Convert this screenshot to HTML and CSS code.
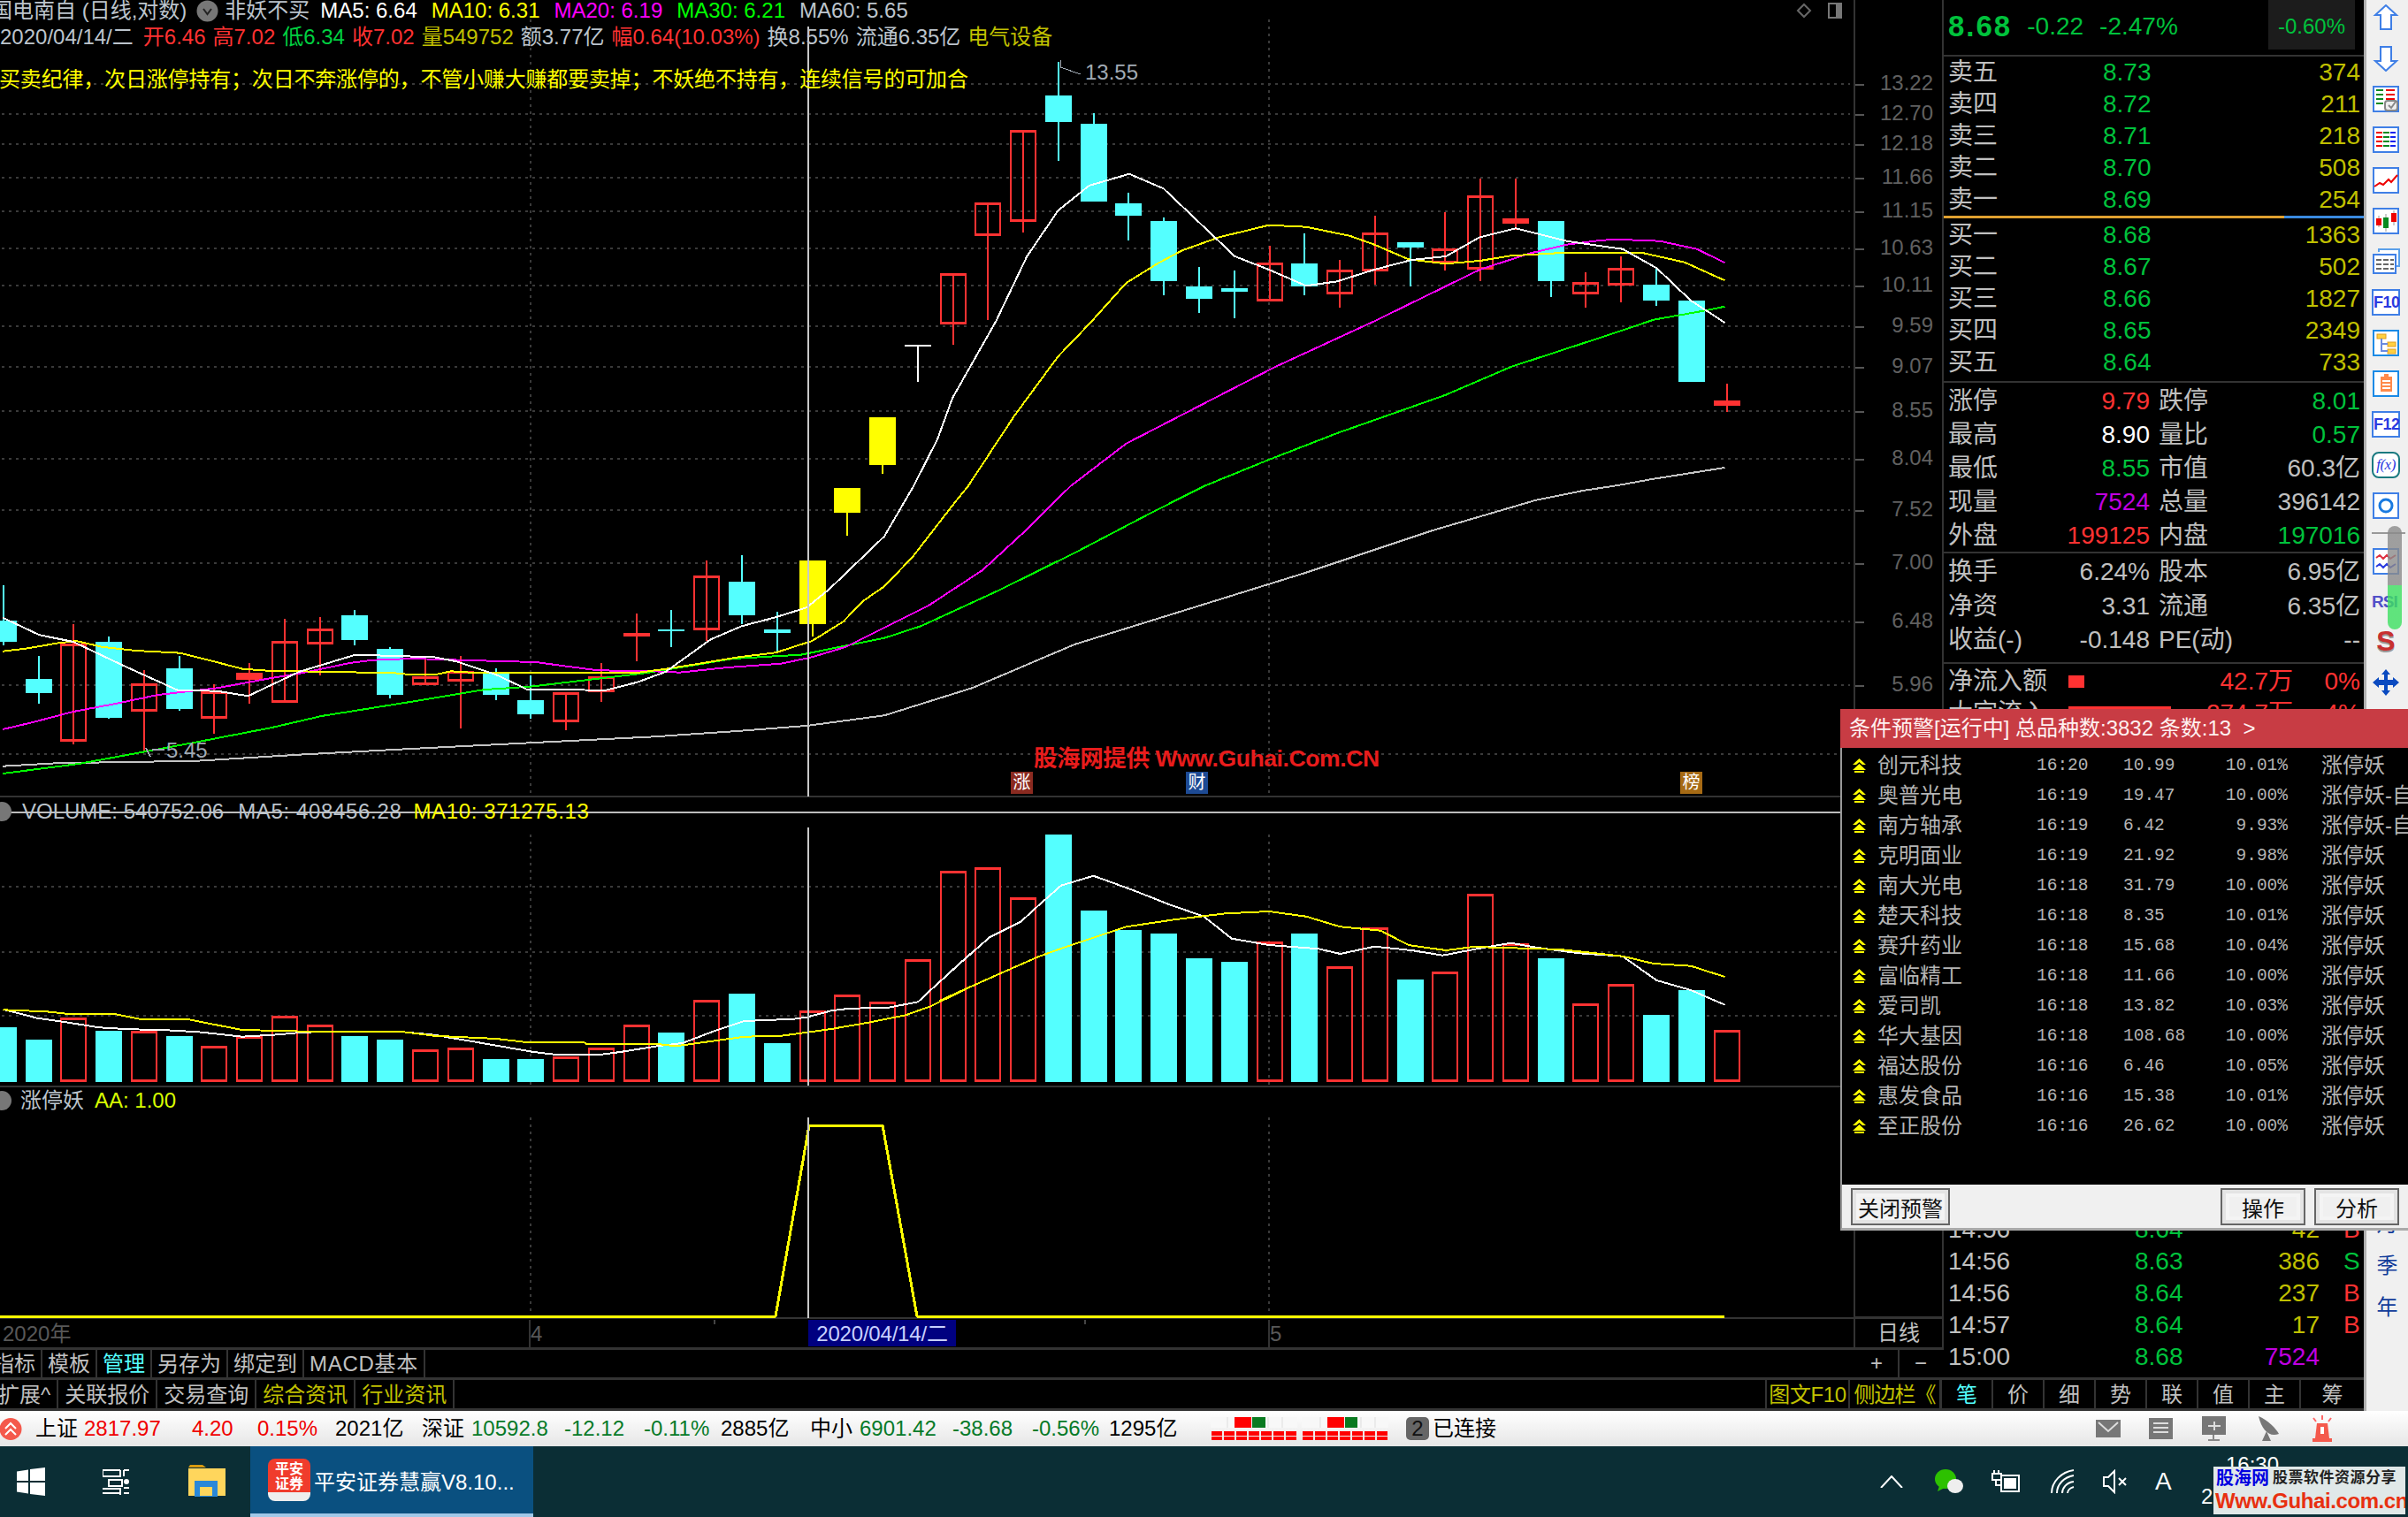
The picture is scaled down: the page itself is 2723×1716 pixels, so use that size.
FILE: index.html
```html
<!DOCTYPE html>
<html lang="zh-CN">
<head>
<meta charset="utf-8">
<title>平安证券慧赢</title>
<link rel="stylesheet" href="styles.css">
<script src="app.js" defer></script>
</head>
<body>
<svg class="defs" width="0" height="0">
  <symbol id="chev" viewBox="0 0 15 16">
    <path d="M7.5 0 15 7H11L7.5 4 4 7H0Z M7.5 6 15 13H0Z M2 14H13V16H2Z" fill="#ffff00"/>
  </symbol>
</svg>
<div class="app">
  <div class="workspace">
    <div class="body">
      <div class="upper">
        <div class="left">
          <div class="main-row">
            <svg id="chart" class="chart-canvas" width="2198" height="1524"></svg>
            <div class="charts">
              <section class="pane pane-price">
                <div class="title-row">
                  <span class="t-gray">国电南自 (日线,对数)</span>
                  <svg class="pill" width="25" height="25" viewBox="0 0 25 25"><circle cx="12.5" cy="12.5" r="12" fill="#777"/><path d="M8 10l4.500 6 4.500-6" fill="none" stroke="#222" stroke-width="2"/></svg>
                  <span class="t-gray study">非妖不买</span>
                  <span class="t-white">MA5: 6.64</span>
                  <span class="t-yellow">MA10: 6.31</span>
                  <span class="t-magenta">MA20: 6.19</span>
                  <span class="t-lime">MA30: 6.21</span>
                  <span class="t-gray">MA60: 5.65</span>
                </div>
                <div class="info-row">
                  <span class="t-gray date">2020/04/14/二</span>
                  <span class="t-red">开6.46</span>
                  <span class="t-red">高7.02</span>
                  <span class="t-green">低6.34</span>
                  <span class="t-red">收7.02</span>
                  <span class="t-olive">量549752</span>
                  <span class="t-gray">额3.77亿</span>
                  <span class="t-red">幅0.64(10.03%)</span>
                  <span class="t-gray">换8.55%</span>
                  <span class="t-gray">流通6.35亿</span>
                  <span class="t-olive">电气设备</span>
                </div>
                <div class="note-row">买卖纪律，次日涨停持有；次日不奔涨停的，不管小赚大赚都要卖掉；不妖绝不持有，连续信号的可加合</div>
                <div class="credit">股海网提供 Www.Guhai.Com.CN</div>
                <span class="mark mark-rise">涨</span>
                <span class="mark mark-fin">财</span>
                <span class="mark mark-top">榜</span>
              </section>
              <section class="pane pane-vol">
                <div class="pane-title">
                  <svg class="pill-s" width="14" height="24" viewBox="0 0 14 24"><circle cx="2" cy="12" r="11" fill="#777"/></svg>
                  <span class="t-gray vol-name">VOLUME: 540752.06</span>
                  <span class="t-gray wide">MA5: 408456.28</span>
                  <span class="t-yellow wide">MA10: 371275.13</span>
                </div>
              </section>
              <section class="pane pane-limit">
                <div class="pane-title">
                  <svg class="pill-s" width="14" height="24" viewBox="0 0 14 24"><circle cx="2" cy="12" r="11" fill="#777"/></svg>
                  <span class="t-gray vol-name">涨停妖</span>
                  <span class="t-lemon">AA: 1.00</span>
                </div>
              </section>
              <div class="timeline">
                <span class="tick-label tl-year">2020年</span>
                <span class="tick-label tl-apr">4</span>
                <span class="tl-current">2020/04/14/二</span>
                <span class="tick-label tl-may">5</span>
              </div>
            </div>
            <div class="axis">
              <div class="axis-space"></div>
              <div class="axis-cell">日线</div>
              <div class="axis-zoom"><span>+</span><span>−</span></div>
            </div>
          </div>
          <nav class="tabs tabs-formula">
            <span class="tab first">指标</span>
            <span class="tab">模板</span>
            <span class="tab on">管理</span>
            <span class="tab">另存为</span>
            <span class="tab">绑定到</span>
            <span class="tab macd">MACD基本</span>
          </nav>
        </div>
        <aside class="quote">
          <header class="quote-head">
            <span class="last">8.68</span>
            <span class="chg">-0.22</span>
            <span class="chg">-2.47%</span>
            <span class="open-gap">-0.60%</span>
          </header>
          <div class="depth">
            <div class="depth-row"><span>卖五</span><span class="up">8.73</span><span class="qty">374</span></div>
            <div class="depth-row"><span>卖四</span><span class="up">8.72</span><span class="qty">211</span></div>
            <div class="depth-row"><span>卖三</span><span class="up">8.71</span><span class="qty">218</span></div>
            <div class="depth-row"><span>卖二</span><span class="up">8.70</span><span class="qty">508</span></div>
            <div class="depth-row"><span>卖一</span><span class="up">8.69</span><span class="qty">254</span></div>
          </div>
          <div class="ratio-line"><i></i></div>
          <div class="depth">
            <div class="depth-row"><span>买一</span><span class="up">8.68</span><span class="qty">1363</span></div>
            <div class="depth-row"><span>买二</span><span class="up">8.67</span><span class="qty">502</span></div>
            <div class="depth-row"><span>买三</span><span class="up">8.66</span><span class="qty">1827</span></div>
            <div class="depth-row"><span>买四</span><span class="up">8.65</span><span class="qty">2349</span></div>
            <div class="depth-row"><span>买五</span><span class="up">8.64</span><span class="qty">733</span></div>
          </div>
          <div class="stats stats-a">
            <div class="stat"><span>涨停</span><b class="red">9.79</b><span>跌停</span><b class="up">8.01</b></div>
            <div class="stat"><span>最高</span><b class="white">8.90</b><span>量比</span><b class="up">0.57</b></div>
            <div class="stat"><span>最低</span><b class="up">8.55</b><span>市值</span><b>60.3亿</b></div>
            <div class="stat"><span>现量</span><b class="purple">7524</b><span>总量</span><b>396142</b></div>
            <div class="stat"><span>外盘</span><b class="red">199125</b><span>内盘</span><b class="up">197016</b></div>
          </div>
          <div class="stats stats-b">
            <div class="stat"><span>换手</span><b>6.24%</b><span>股本</span><b>6.95亿</b></div>
            <div class="stat"><span>净资</span><b>3.31</b><span>流通</span><b>6.35亿</b></div>
            <div class="stat"><span>收益(-)</span><b>-0.148</b><span>PE(动)</span><b>--</b></div>
          </div>
          <div class="flows">
            <div class="flow"><span>净流入额</span><i class="flow-bar one"></i><b>42.7万</b><b>0%</b></div>
            <div class="flow"><span>大宗流入</span><i class="flow-bar big"></i><b>274.7万</b><b>4%</b></div>
          </div>
          <div class="trades">
            <div class="trade"><span>14:56</span><span class="up">8.64</span><span class="qty">42</span><span class="red">B</span></div>
            <div class="trade"><span>14:56</span><span class="up">8.63</span><span class="qty">386</span><span class="up">S</span></div>
            <div class="trade"><span>14:56</span><span class="up">8.64</span><span class="qty">237</span><span class="red">B</span></div>
            <div class="trade"><span>14:57</span><span class="up">8.64</span><span class="qty">17</span><span class="red">B</span></div>
            <div class="trade"><span>15:00</span><span class="up">8.68</span><span class="purple right">7524</span><span></span></div>
          </div>
        </aside>
      </div>
      <nav class="tabs tabs-info">
        <span class="tab first">扩展^</span>
        <span class="tab">关联报价</span>
        <span class="tab">交易查询</span>
        <span class="tab olive">综合资讯</span>
        <span class="tab olive">行业资讯</span>
        <span class="tab-gap"></span>
        <span class="tab olive f10">图文F10</span>
        <span class="tab olive side">侧边栏《</span>
        <span class="tab sq on">笔</span>
        <span class="tab sq">价</span>
        <span class="tab sq">细</span>
        <span class="tab sq">势</span>
        <span class="tab sq">联</span>
        <span class="tab sq">值</span>
        <span class="tab sq">主</span>
        <span class="tab sq">筹</span>
      </nav>
    </div>
    <div class="tools">
      <svg class="ti" width="32" height="30" viewBox="0 0 32 30"><path d="M16 1 28 12H22V28H10V12H4Z" fill="#fff" stroke="#3f7fe6" stroke-width="2"/></svg>
      <svg class="ti" width="32" height="30" viewBox="0 0 32 30"><path d="M16 29 28 18H22V2H10V18H4Z" fill="#fff" stroke="#3f7fe6" stroke-width="2"/></svg>
      <svg class="ti" width="32" height="30" viewBox="0 0 32 30"><rect x="2" y="1" width="28" height="28" fill="#fff" stroke="#3f7fe6" stroke-width="2"/><path d="M5 5h8M5 10h8M5 15h8M5 20h8" stroke="#0a8a20" stroke-width="2"/><path d="M16 5h10M16 10h10M16 15h10" stroke="#e00" stroke-width="2"/><rect x="15" y="17" width="14" height="11" rx="3" fill="#eee" stroke="#888" stroke-width="2"/><path d="M19 22l3 3 5-7" fill="none" stroke="#888" stroke-width="2"/></svg>
      <svg class="ti" width="32" height="30" viewBox="0 0 32 30"><rect x="2" y="1" width="28" height="28" fill="#fff" stroke="#3f7fe6" stroke-width="2"/><path d="M5 7h7M5 12h7M5 17h7M5 22h7" stroke="#e00" stroke-width="2"/><path d="M13 7h7M13 12h7M13 17h7M13 22h7" stroke="#0a8a20" stroke-width="2"/><path d="M21 7h6M21 12h6M21 17h6M21 22h6" stroke="#12e" stroke-width="2"/></svg>
      <svg class="ti" width="32" height="30" viewBox="0 0 32 30"><rect x="2" y="1" width="28" height="28" fill="#fff" stroke="#3f7fe6" stroke-width="2"/><path d="M3 22 9 18 13 20 19 14 22 17 29 9" fill="none" stroke="#e00" stroke-width="2"/></svg>
      <svg class="ti" width="32" height="30" viewBox="0 0 32 30"><rect x="2" y="1" width="28" height="28" fill="#fff" stroke="#3f7fe6" stroke-width="2"/><path d="M8 9V22M16 7V27M25 3V20" stroke="#999" stroke-width="1"/><rect x="5" y="12" width="6" height="8" fill="#e00"/><rect x="13" y="11" width="6" height="12" fill="#0a8a20"/><rect x="22" y="6" width="6" height="10" fill="#e00"/></svg>
      <svg class="ti" width="32" height="30" viewBox="0 0 32 30"><path d="M8 4V1H31V20H28" fill="#fff" stroke="#5aa0ea" stroke-width="2"/><rect x="2" y="7" width="25" height="21" fill="#fff" stroke="#3f7fe6" stroke-width="2"/><path d="M5 13h6M13 13h6M21 13h4M5 18h6M13 18h6M21 18h4M5 23h6M13 23h6M21 23h4" stroke="#666" stroke-width="2"/></svg>
      <div class="ti tb">F10</div>
      <svg class="ti" width="32" height="30" viewBox="0 0 32 30"><rect x="2" y="1" width="28" height="28" fill="#fff" stroke="#1a8ae6" stroke-width="2"/><rect x="6" y="5" width="10" height="5" fill="#ffd040" stroke="#e0a020"/><rect x="18" y="14" width="9" height="5" fill="#ffd040" stroke="#e0a020"/><rect x="18" y="22" width="9" height="5" fill="#ffd040" stroke="#e0a020"/><path d="M11 10V24H18M11 16H18" fill="none" stroke="#6a8ae0" stroke-width="2"/></svg>
      <svg class="ti" width="32" height="30" viewBox="0 0 32 30"><rect x="2" y="1" width="28" height="28" fill="#fff" stroke="#1a8ae6" stroke-width="2"/><rect x="10" y="7" width="13" height="17" fill="#ff8a4a"/><rect x="14" y="4" width="5" height="4" fill="#ff8a4a"/><path d="M12 12h9M12 16h9M12 20h9" stroke="#fff" stroke-width="2"/></svg>
      <div class="ti tb">F12</div>
      <div class="ti tb fx">f(x)</div>
      <svg class="ti" width="32" height="30" viewBox="0 0 32 30"><rect x="2" y="1" width="28" height="28" fill="#fff" stroke="#3f7fe6" stroke-width="2"/><ellipse cx="16" cy="15" rx="7" ry="7" fill="none" stroke="#1a7ae0" stroke-width="3"/></svg>
      <div class="tool-sep"></div>
      <svg class="ti" width="32" height="30" viewBox="0 0 32 30"><rect x="2" y="1" width="28" height="28" fill="#fff" stroke="#3f7fe6" stroke-width="2"/><path d="M5 11 9 8 13 12 17 8 21 12 27 8" fill="none" stroke="#e03040" stroke-width="2"/><path d="M5 21 9 18 13 22 17 18 21 22 27 18" fill="none" stroke="#2a3ae0" stroke-width="2"/></svg>
      <div class="tool-rsi">RSI</div>
      <div class="tool-s">S</div>
      <svg class="ti move" width="32" height="30" viewBox="0 0 32 30"><path d="M16 0 21 6H18V12H24V9L31 15 24 21V18H18V24H21L16 30 11 24H14V18H8V21L1 15 8 9V12H14V6H11Z" fill="#0a4ac0"/></svg>
      <div class="tool-words"><span>月</span><span>季</span><span>年</span></div>
      <div class="scroll-thumb"></div>
    </div>
  </div>
  <footer class="statusbar">
    <svg class="alarm" width="25" height="25" viewBox="0 0 25 25"><circle cx="12" cy="12.500" r="12.500" fill="#f4594c"/><path d="M6 12l6-6 6 6M6 19l6-6 6 6" fill="none" stroke="#fff" stroke-width="2"/></svg>
    <div class="idx idx-sh"><span>上证</span><span class="s-red">2817.97</span><span class="s-red">4.20</span><span class="s-red">0.15%</span><span>2021亿</span></div>
    <div class="idx idx-sz"><span>深证</span><span class="s-green">10592.8</span><span class="s-green">-12.12</span><span class="s-green">-0.11%</span><span>2885亿</span></div>
    <div class="idx idx-sz"><span>中小</span><span class="s-green">6901.42</span><span class="s-green">-38.68</span><span class="s-green">-0.56%</span><span>1295亿</span></div>
    <svg class="meter" width="98" height="26" viewBox="0 0 98 26"><rect width="98" height="12" fill="#f8f8f8"/><path d="M19 0v12M65 0v12M81 0v12" stroke="#ddd"/><rect x="27" width="19" height="12" fill="#f00"/><rect x="47" width="15" height="12" fill="#0a7a20"/><path d="M7 16v5M21 16v5M35 16v5M49 16v5M63 16v5M77 16v5M91 16v5M7 22v4M21 22v4M35 22v4M49 22v4M63 22v4M77 22v4M91 22v4" stroke="#f00" stroke-width="12" stroke-dasharray="5 1"/></svg>
    <svg class="meter second" width="98" height="26" viewBox="0 0 98 26"><rect width="98" height="12" fill="#f8f8f8"/><path d="M21 0v12M67 0v12M83 0v12" stroke="#ddd"/><rect x="29" width="19" height="12" fill="#f00"/><rect x="49" width="14" height="12" fill="#0a7a20"/><path d="M7 16v5M21 16v5M35 16v5M49 16v5M63 16v5M77 16v5M91 16v5M7 22v4M21 22v4M35 22v4M49 22v4M63 22v4M77 22v4M91 22v4" stroke="#f00" stroke-width="12" stroke-dasharray="5 1"/></svg>
    <span class="badge">2</span>
    <span class="conn">已连接</span>
    <div class="status-icons">
      <svg width="28" height="28" viewBox="0 0 28 28"><rect width="28" height="20" y="4" fill="#777"/><path d="M3 7 14 17 25 7" fill="none" stroke="#ddd" stroke-width="2"/></svg>
      <svg width="28" height="28" viewBox="0 0 28 28"><rect width="27" height="24" y="2" fill="#777"/><path d="M5 8h17M5 13h17M5 18h17" stroke="#ddd" stroke-width="2"/></svg>
      <svg width="28" height="28" viewBox="0 0 28 28"><rect width="27" height="21" fill="#777"/><path d="M13 21v5M7 27h13" stroke="#888" stroke-width="2"/><path d="M7 11h14M14 6v10" stroke="#ddd" stroke-width="2"/></svg>
      <svg width="28" height="28" viewBox="0 0 28 28"><path d="M4 0C14 4 24 14 27 20 16 24 8 16 4 0ZM13 17 8 28H18Z" fill="#777"/></svg>
      <svg width="32" height="30" viewBox="0 0 32 30"><path d="M16 0v5M6 3l3 4M26 3l-3 4" stroke="#f66" stroke-width="2"/><path d="M8 26 10 9H22L24 26Z" fill="#f4594c"/><rect x="5" y="26" width="22" height="4" fill="#f4594c"/><rect x="14" y="13" width="4" height="8" fill="#fff"/></svg>
    </div>
  </footer>
  <footer class="taskbar">
    <svg class="win" width="32" height="32" viewBox="0 0 32 32"><path d="M0 4.500 13 2.500V15H0ZM15 2 32 0V15H15ZM0 17H13V29.500L0 27.500ZM15 17H32V32L15 30Z" fill="#fff"/></svg>
    <svg class="taskview" width="30" height="30" viewBox="0 0 30 30"><path d="M0 2H20M0 9H20V2M0 9V2M24 2H30M24 9V2M7 13H22V20H7ZM0 23H20V30M0 28H20M24 22H30M24 28H30" fill="none" stroke="#fff" stroke-width="2"/><circle cx="27" cy="15" r="3" fill="#fff"/></svg>
    <svg class="folder" width="44" height="36" viewBox="0 0 44 36"><path d="M1 3 3 0H17L21 3Z" fill="#d89a10"/><rect x="1" y="4" width="42" height="31" fill="#ffd65c"/><rect x="8" y="18" width="26" height="18" fill="#2a88d8"/><rect x="14" y="25" width="14" height="10" fill="#ffd65c"/></svg>
    <div class="task-active">
      <div class="pa-logo"><span>平安</span><span>证券</span><i></i></div>
      <span class="task-label">平安证券慧赢V8.10...</span>
    </div>
    <div class="tray">
      <svg width="28" height="14" viewBox="0 0 28 14"><path d="M2 14 14 1 26 14" fill="none" stroke="#fff" stroke-width="2"/></svg>
      <svg class="wx" width="32" height="28" viewBox="0 0 32 28"><ellipse cx="12" cy="11" rx="12" ry="11" fill="#2dc100"/><path d="M5 19 3 25 11 21Z" fill="#2dc100"/><ellipse cx="23" cy="19" rx="9" ry="8" fill="#eee"/></svg>
      <svg class="plug" width="32" height="28" viewBox="0 0 32 28"><path d="M3 1v4M8 1v4M1 5h10v7H1ZM5 12v6H11" fill="none" stroke="#fff" stroke-width="2"/><rect x="11" y="7" width="20" height="18" fill="none" stroke="#fff" stroke-width="2"/><rect x="14" y="10" width="14" height="12" fill="#fff"/></svg>
      <svg width="28" height="28" viewBox="0 0 28 28"><path d="M1 27C1 14 12 3 26 1M7 27C7 17 15 9 26 7M13 27C13 21 18 15 26 14M19 27C19 24 22 21 26 20" fill="none" stroke="#fff" stroke-width="2"/></svg>
      <svg class="vol-icon" width="28" height="28" viewBox="0 0 28 28"><path d="M1 9H6L13 2V26L6 19H1Z" fill="none" stroke="#fff" stroke-width="2"/><path d="M18 10 26 18M26 10 18 18" stroke="#fff" stroke-width="2"/></svg>
      <span class="ime">A</span>
      <div class="clock"><span>16:30</span><span class="clock-date">2020/5/25</span></div>
      <div class="site-mark">
        <div class="site-top"><b>股海网</b><span>股票软件资源分享</span></div>
        <div class="site-url">Www.Guhai.com.cn</div>
      </div>
    </div>
  </footer>

  <section class="alert">
    <header class="alert-head">条件预警[运行中] 总品种数:3832 条数:13 &nbsp;&gt;</header>
    <div class="alert-list">
      <div class="alert-row"><svg width="15" height="16"><use href="#chev"/></svg><span>创元科技</span><span class="m">16:20</span><span class="m">10.99</span><span class="m right">10.01%</span><span class="sig">涨停妖</span></div>
      <div class="alert-row"><svg width="15" height="16"><use href="#chev"/></svg><span>奥普光电</span><span class="m">16:19</span><span class="m">19.47</span><span class="m right">10.00%</span><span class="sig">涨停妖-自</span></div>
      <div class="alert-row"><svg width="15" height="16"><use href="#chev"/></svg><span>南方轴承</span><span class="m">16:19</span><span class="m">6.42</span><span class="m right">9.93%</span><span class="sig">涨停妖-自</span></div>
      <div class="alert-row"><svg width="15" height="16"><use href="#chev"/></svg><span>克明面业</span><span class="m">16:19</span><span class="m">21.92</span><span class="m right">9.98%</span><span class="sig">涨停妖</span></div>
      <div class="alert-row"><svg width="15" height="16"><use href="#chev"/></svg><span>南大光电</span><span class="m">16:18</span><span class="m">31.79</span><span class="m right">10.00%</span><span class="sig">涨停妖</span></div>
      <div class="alert-row"><svg width="15" height="16"><use href="#chev"/></svg><span>楚天科技</span><span class="m">16:18</span><span class="m">8.35</span><span class="m right">10.01%</span><span class="sig">涨停妖</span></div>
      <div class="alert-row"><svg width="15" height="16"><use href="#chev"/></svg><span>赛升药业</span><span class="m">16:18</span><span class="m">15.68</span><span class="m right">10.04%</span><span class="sig">涨停妖</span></div>
      <div class="alert-row"><svg width="15" height="16"><use href="#chev"/></svg><span>富临精工</span><span class="m">16:18</span><span class="m">11.66</span><span class="m right">10.00%</span><span class="sig">涨停妖</span></div>
      <div class="alert-row"><svg width="15" height="16"><use href="#chev"/></svg><span>爱司凯</span><span class="m">16:18</span><span class="m">13.82</span><span class="m right">10.03%</span><span class="sig">涨停妖</span></div>
      <div class="alert-row"><svg width="15" height="16"><use href="#chev"/></svg><span>华大基因</span><span class="m">16:18</span><span class="m">108.68</span><span class="m right">10.00%</span><span class="sig">涨停妖</span></div>
      <div class="alert-row"><svg width="15" height="16"><use href="#chev"/></svg><span>福达股份</span><span class="m">16:16</span><span class="m">6.46</span><span class="m right">10.05%</span><span class="sig">涨停妖</span></div>
      <div class="alert-row"><svg width="15" height="16"><use href="#chev"/></svg><span>惠发食品</span><span class="m">16:16</span><span class="m">15.38</span><span class="m right">10.01%</span><span class="sig">涨停妖</span></div>
      <div class="alert-row"><svg width="15" height="16"><use href="#chev"/></svg><span>至正股份</span><span class="m">16:16</span><span class="m">26.62</span><span class="m right">10.00%</span><span class="sig">涨停妖</span></div>
    </div>
    <div class="alert-foot">
      <button class="btn btn-close">关闭预警</button>
      <span class="foot-gap"></span>
      <button class="btn">操作</button>
      <button class="btn">分析</button>
    </div>
  </section>
</div>
</body>
</html>
```
FILE: styles.css
```css
* { box-sizing: border-box; }
html, body { margin: 0; padding: 0; background: #000; }
body { width: 2723px; height: 1716px; overflow: hidden; font-family: "Liberation Sans", "Noto Sans CJK SC", sans-serif; font-size: 24px; color: #c0c0c0; }
.defs { position: absolute; }
.app { position: relative; width: 2723px; height: 1716px; display: flex; flex-direction: column; overflow: hidden; }
.workspace { display: flex; height: 1596px; flex: none; }
.body { width: 2673px; display: flex; flex-direction: column; flex: none; }
.upper { display: flex; height: 1558px; flex: none; }
.left { width: 2198px; display: flex; flex-direction: column; flex: none; }
.main-row { position: relative; display: flex; height: 1524px; flex: none; }
.chart-canvas { position: absolute; left: 0; top: 0; }
.chart-canvas text { font-family: "Liberation Sans", "Noto Sans CJK SC", sans-serif; font-size: 24px; }
.charts { position: relative; width: 2096px; display: flex; flex-direction: column; flex: none; }
.pane { position: relative; white-space: nowrap; }
.pane-price { height: 902px; }
.pane-vol { height: 328px; }
.pane-limit { height: 263px; }
.title-row { display: flex; align-items: center; gap: 16px; height: 24px; line-height: 24px; margin-left: -10px; }
.title-row .pill { margin: 0 -9px 0 -5px; }
.title-row .study { margin-right: -4px; }
.info-row { display: flex; align-items: center; gap: 8px; height: 36px; line-height: 36px; }
.info-row .date { margin-right: 3px; }
.note-row { margin-top: 11px; height: 38px; line-height: 38px; color: #ffff00; letter-spacing: -.18px; margin-left: -1px; }
.t-gray { color: #bcc4cc; }
.t-white { color: #fff; }
.t-yellow { color: #ffff00; }
.t-magenta { color: #ff00ff; }
.t-lime { color: #00ff00; }
.t-red { color: #ff3232; }
.t-green { color: #00d040; }
.t-olive { color: #c0c000; }
.t-lemon { color: #d8ff00; }
.credit { position: absolute; left: 1169px; top: 843px; line-height: 30px; font-size: 26.500px; font-weight: 700; color: #e81c1c; letter-spacing: -.4px; }
.mark { position: absolute; top: 873px; width: 25px; height: 25px; line-height: 25px; text-align: center; font-size: 20px; color: #fff; }
.mark-rise { left: 1143px; background: #8a2a20; }
.mark-fin { left: 1341px; background: #1d4a94; }
.mark-top { left: 1900px; background: #a66a14; }
.pane-title { display: flex; align-items: center; gap: 13px; height: 32px; line-height: 32px; }
.pane-limit .pane-title { height: 30px; gap: 12px; }
.pill-s { margin-right: -3px; flex: none; }
.pane-vol .pill-s { margin-right: -2px; }
.wide { letter-spacing: .65px; }
.pane-vol .vol-name { margin-right: 3px; }
.timeline { position: relative; height: 31px; line-height: 31px; }
.tick-label { position: absolute; top: 0; color: #585858; }
.tl-year { left: 3px; }
.tl-apr { left: 600px; }
.tl-may { left: 1436px; }
.tl-current { position: absolute; left: 914px; top: 0; width: 167px; height: 30px; background: #000080; color: #c8d0ff; text-align: center; letter-spacing: -.2px; }
.axis { position: relative; width: 102px; flex: none; display: flex; flex-direction: column; border-left: 2px solid #333; border-right: 2px solid #333; }
.axis-space { height: 1492px; flex: none; border-bottom: 3px solid #333; }
.axis-cell { height: 32px; line-height: 32px; text-align: center; flex: none; }
.tabs { display: flex; align-items: stretch; border-top: 3px solid #333; white-space: nowrap; }
.tabs-formula { height: 34px; line-height: 31px; overflow: hidden; }
.tabs-formula .tab { padding: 0 6px; }
.tabs-formula .first { margin-left: -14px; }
.tabs-formula .macd { letter-spacing: .7px; }
.tabs-info { height: 38px; line-height: 33px; border-bottom: 3px solid #333; }
.tabs-info .tab { padding: 0 7px; }
.tabs-info .first { margin-left: -9px; }
.tab { border-right: 2px solid #333; color: #c0c0c0; }
.tab.on { color: #54ffff; }
.tab.olive { color: #c0c000; }
.tab-gap { flex: 1; }
.tabs-info .f10 { padding: 0; width: 96px; border-left: 2px solid #333; text-align: center; letter-spacing: -.4px; }
.tabs-info .side { padding: 0; width: 104px; border-right: 3px solid #333; text-align: center; letter-spacing: -1px; }
.tabs-info .sq { width: 58px; padding: 0; text-align: center; }
.tabs-info .sq:last-child { border-right: 0; width: 71px; }
.axis-zoom { position: absolute; left: 0; right: 0; top: 1527px; height: 32px; display: flex; line-height: 30px; text-align: center; z-index: 2; }
.axis-zoom span { flex: 1; border-right: 2px solid #333; }
.axis-zoom span:last-child { border-right: 0; }
.quote { position: relative; width: 475px; flex: none; font-size: 28px; display: flex; flex-direction: column; overflow: hidden; }
.quote-head { display: flex; align-items: center; height: 64px; flex: none; padding: 0 10px 2px 5px; border-bottom: 2px solid #333; color: #00c23c; }
.last { font-size: 33px; font-weight: 700; letter-spacing: 2px; margin-right: 17px; }
.chg { margin-right: 18px; }
.open-gap { margin-left: auto; width: 98px; height: 57px; margin-top: -6px; line-height: 62px; background: #1c1c1c; font-size: 24px; text-align: center; }
.depth { flex: none; }
.depth-row { display: grid; grid-template-columns: 175px 1fr auto; height: 36px; line-height: 36px; padding: 0 4px 0 5px; }
.up { color: #00c23c; }
.qty { color: #c0c000; }
.red { color: #ff3232; }
.white { color: #fff; }
.purple { color: #c000e0; }
.ratio-line { height: 3px; margin-bottom: 1px; background: #3a8ae0; flex: none; }
.ratio-line i { display: block; width: 385px; height: 3px; background: #e0a030; }
.stats { flex: none; border-top: 2px solid #333; padding-top: 2px; }
.stats-a { margin-top: 3px; height: 193px; }
.stats-b { height: 125px; }
.stat { display: grid; grid-template-columns: 114px 114px 124px 114px; height: 38px; line-height: 38px; padding: 0 4px 0 5px; }
.stat b { font-weight: 400; text-align: right; }
.stat span:nth-child(3) { margin-left: 10px; }
.stats-b .stat { height: 38.500px; line-height: 38.500px; }
.flows { border-top: 2px solid #333; padding-top: 2px; flex: none; }
.flow { display: grid; grid-template-columns: 136px 254px 1fr; height: 36px; line-height: 36px; padding: 0 4px 0 5px; }
.flow b { font-weight: 400; color: #ff3232; text-align: right; grid-row: 1; }
.flow b:nth-of-type(1) { grid-column: 2; }
.flow b:nth-of-type(2) { grid-column: 3; }
.flow-bar { display: block; height: 14px; background: #ff3232; margin-top: 11px; grid-column: 2; grid-row: 1; justify-self: start; }
.flow-bar.one { width: 18px; }
.flow-bar.big { width: 116px; margin-top: 10px; }
.trades { margin-top: auto; padding-bottom: 5px; flex: none; }
.trade { display: grid; grid-template-columns: 211px 100px 109px 54px; height: 36px; line-height: 36px; padding-left: 5px; }
.trade span:last-child { margin-left: 27px; }
.trade .qty, .trade .right { text-align: right; }
.tools { position: relative; width: 50px; height: 1636px; flex: none; background: #f0f0f0; border-left: 3px solid #b0b0b0; display: flex; flex-direction: column; align-items: flex-start; gap: 16px; padding: 5px 0 0 6px; z-index: 1; }
.ti { display: block; flex: none; }
.tb { width: 32px; height: 30px; border: 2px solid #3f7fe6; background: #fff; color: #2a3ae0; font-size: 18px; line-height: 26px; text-align: center; font-weight: 700; letter-spacing: -.5px; }
.tb.fx { border-color: #1a7a80; border-radius: 8px; font-style: italic; font-weight: 400; font-size: 17px; font-family: "Liberation Serif", serif; }
.tool-sep { width: 38px; height: 2px; background: #999; margin: -1px 0 0 0; flex: none; }
.tool-rsi { width: 32px; height: 18px; margin-top: 6px; line-height: 18px; font-size: 19px; font-weight: 700; color: #5050c8; letter-spacing: -1px; }
.tool-s { width: 32px; height: 28px; margin-top: 5px; line-height: 28px; text-align: center; font-size: 32px; font-weight: 700; color: #c83030; text-shadow: 0 2px 0 #999; }
.move { margin-top: 2px; }
.tool-words { position: absolute; left: 0; right: 0; top: 1361px; display: flex; flex-direction: column; color: #123c9a; font-size: 24px; text-align: center; line-height: 47px; }
.scroll-thumb { position: absolute; left: 24px; top: 595px; width: 16px; height: 117px; border-radius: 8px; background: linear-gradient(#8a8a8acc 0, #8a8a8acc 57%, #3ce060cc 57%, #3ce060cc 100%); }
.statusbar { position: absolute; left: 0; top: 1596px; width: 2723px; height: 40px; line-height: 38px; background: linear-gradient(#ffffff, #e6e6e6); color: #000; display: flex; align-items: center; white-space: nowrap; z-index: 2; }
.alarm { flex: none; margin-right: 15px; }
.idx { display: grid; flex: none; }
.idx-sh { grid-template-columns: 55px 122px 74px 88px 98px; }
.idx-sz { grid-template-columns: 56px 105px 90px 87px 101px; }
.s-red { color: #f00000; }
.s-green { color: #067a28; }
.meter { flex: none; margin-left: 14px; }
.meter.second { margin-left: 5px; }
.badge { width: 26px; height: 26px; margin-left: 20px; border-radius: 5px; background: #666; color: #111; line-height: 26px; text-align: center; flex: none; }
.conn { margin-left: 4px; }
.status-icons { margin-left: auto; margin-right: 81px; display: flex; align-items: center; gap: 32px; }
.taskbar { position: absolute; left: 0; top: 1636px; width: 2723px; height: 80px; background: #0b2e35; display: flex; align-items: center; color: #fff; z-index: 2; }
.win { margin-left: 19px; flex: none; }
.taskview { margin-left: 65px; flex: none; }
.folder { margin-left: 66px; flex: none; margin-top: -2px; }
.task-active { margin-left: 27px; width: 320px; height: 80px; background: #0a5080; border-bottom: 4px solid #a0c8e8; display: flex; align-items: center; padding-left: 20px; flex: none; }
.pa-logo { position: relative; width: 48px; height: 48px; border-radius: 8px; background: linear-gradient(#f03c2c 80%, #eee 80%); display: flex; flex-direction: column; font-size: 16px; line-height: 17px; font-weight: 700; text-align: center; padding-top: 3px; color: #fff; flex: none; }
.task-label { margin-left: 4px; white-space: nowrap; }
.tray { position: relative; margin-left: auto; width: 598px; height: 80px; display: flex; align-items: center; gap: 35px; flex: none; }
.plug { margin-left: -3px; }
.vol-icon { margin-left: -4px; }
.ime { font-size: 28px; margin-left: -4px; }
.clock { position: absolute; left: 362px; top: 3px; width: 120px; text-align: center; display: flex; flex-direction: column; line-height: 36px; font-size: 24px; }
.clock-date { letter-spacing: 1px; }
.site-mark { position: absolute; left: 378px; top: 23px; width: 217px; height: 54px; background: #e0e8e8; overflow: hidden; white-space: nowrap; }
.site-top { display: flex; align-items: center; height: 26px; line-height: 26px; padding-left: 3px; }
.site-top b { color: #0000e0; font-size: 20px; }
.site-top span { color: #222; font-family: "Liberation Serif", "Noto Sans CJK SC", serif; font-size: 17px; margin-left: 4px; font-weight: 700; letter-spacing: .5px; }
.site-url { height: 28px; line-height: 26px; color: #e83010; font-size: 24px; font-weight: 700; font-family: "Liberation Sans", sans-serif; letter-spacing: -.4px; padding-left: 2px; }
.alert { position: absolute; left: 2081px; top: 802px; width: 642px; height: 590px; background: #000; border-left: 2px solid #999; border-bottom: 3px solid #aaa; display: flex; flex-direction: column; z-index: 3; }
.alert-head { height: 44px; flex: none; margin-left: -2px; background: #c83c44; color: #fff0f0; line-height: 44px; padding-left: 10px; font-size: 24px; white-space: nowrap; }
.alert-list { flex: 1; padding-top: 3px; overflow: hidden; color: #b4b4b4; font-size: 24px; }
.alert-row { display: grid; grid-template-columns: 28px 180px 98px 110px 76px 1fr; height: 34px; line-height: 34px; padding-left: 12px; align-items: center; white-space: nowrap; }
.m { font-family: "Liberation Mono", monospace; font-size: 19.500px; }
.right { text-align: right; }
.sig { margin-left: 38px; overflow: hidden; }
.alert-foot { height: 49px; flex: none; background: #f0f0f0; display: flex; align-items: flex-start; padding: 4px 10px 0 10px; gap: 10px; }
.foot-gap { flex: 1; }
.btn { width: 96px; height: 42px; padding: 0; background: #f0f0f0; border: 2px solid #666; box-shadow: inset 0 0 0 4px #e4e4e4, inset 0 0 0 8px #f4f4f4; font: 24px "Liberation Sans", "Noto Sans CJK SC", sans-serif; color: #111; }
.btn-close { width: 112px; }
```
FILE: app.js
```js
(function () {
  var svg = document.getElementById('chart');
  var NS = 'http://www.w3.org/2000/svg';
  var CYAN = '#54ffff', RED = '#ff3232', YEL = '#ffff00', WHT = '#ffffff';
  var BAR_X0 = 903.5, STEP = 39.77, BAR_W = 30;

  function el(name, attrs, text) {
    var n = document.createElementNS(NS, name);
    Object.keys(attrs).forEach(function (k) { n.setAttribute(k, attrs[k]); });
    if (text != null) n.textContent = text;
    svg.appendChild(n);
    return n;
  }
  function box(x, y, w, h, fill) {
    el('rect', { x: Math.round(x), y: Math.round(y), width: w, height: Math.max(h, 1), fill: fill, 'shape-rendering': 'crispEdges' });
  }
  function hollow(x, y, w, h, color) {
    box(x, y, w, 3, color);
    box(x, y + h - 3, w, 3, color);
    box(x, y, 2, h, color);
    box(x + w - 2, y, 2, h, color);
  }
  function line(pts, color, width) {
    el('polyline', {
      points: pts.map(function (p) { return p[0].toFixed(1) + ',' + p[1].toFixed(1); }).join(' '),
      fill: 'none', stroke: color, 'stroke-width': width || 2, 'shape-rendering': 'crispEdges', 'stroke-linejoin': 'round'
    });
  }
  function crop(sx, x0, y0, pts) {
    return pts.map(function (p) { return [x0 + p[0] / sx, y0 + p[1] / 3]; });
  }
  var priceL = function (p) { return crop(1.568, 0, 600, p); };
  var priceR = function (p) { return crop(1.4255, 1000, 50, p); };
  var volL = function (p) { return crop(1.4255, 0, 900, p); };
  var volR = function (p) { return crop(1.4255, 1000, 900, p); };

  // type, body top, body bottom, wick top, wick bottom, volume top
  var BARS = [
    ['c',702,726,662,730,1162],['c',768,784,742,796,1176],['r',728,839,706,842,1151],['c',726,812,720,813,1166],
    ['r',773,805,758,850,1166],['c',756,802,742,804,1172],['r',782,813,774,830,1183],['r',761,767,750,796,1172],
    ['r',725,795,700,795,1149],['r',711,729,698,764,1159],['c',696,724,690,730,1172],['c',734,786,732,790,1176],
    ['r',765,775,744,775,1187],['r',759,771,742,824,1185],['c',762,786,756,792,1198],['c',792,808,764,813,1198],
    ['r',783,817,783,826,1195],['r',765,783,750,794,1185],['r',716,718,694,748,1159],['c',712,714,690,732,1168],
    ['r',651,713,634,725,1131],['c',658,696,628,706,1124],['c',712,716,692,738,1180],['y',634,706,634,720,1143],
    ['y',552,580,552,606,1125],['y',472,526,472,536,1133],['w',390,392,390,432,1085],['r',309,367,309,390,985],
    ['r',229,267,229,362,981],['r',147,251,147,263,1015],['c',108,138,70,182,944],['c',140,228,128,228,1030],
    ['c',230,244,218,272,1052],['c',250,318,246,334,1056],['c',324,338,302,354,1084],['c',326,330,306,360,1088],
    ['r',297,341,278,341,1065],['c',298,324,264,334,1056],['r',305,333,294,348,1093],['r',263,307,244,322,1049],
    ['c',274,280,274,324,1108],['r',281,298,240,306,1099],['r',221,305,202,318,1011],['r',247,251,202,260,1067],
    ['c',250,318,250,336,1084],['r',319,333,308,348,1135],['r',303,323,290,342,1113],['c',322,340,302,346,1148],
    ['c',340,432,340,432,1120],['r',453,457,434,466,1165]
  ];
  var VOL_BASE = 1224;

  // grid
  var PRICE_Y = [95,129,163,201,239,281,323,369,415,465,519,577,637,703,775,853];
  var LABELS = ['13.22','12.70','12.18','11.66','11.15','10.63','10.11','9.59','9.07','8.55','8.04','7.52','7.00','6.48','5.96'];
  function dotted(x1, y1, x2, y2) {
    el('line', { x1: x1, y1: y1, x2: x2, y2: y2, stroke: '#3a3a3a', 'stroke-width': 2, 'stroke-dasharray': '3 5', 'shape-rendering': 'crispEdges' });
  }
  PRICE_Y.forEach(function (y) { dotted(2, y, 2092, y); });
  [1003, 1077, 1149].forEach(function (y) { dotted(2, y, 2080, y); });
  [600, 1435].forEach(function (x) {
    dotted(x, 22, x, 898); dotted(x, 944, x, 1228); dotted(x, 1264, x, 1490);
  });
  [901, 1229, 1491].forEach(function (y) { box(0, y - 1, 2198, 2, '#333'); });
  box(0, 918, 2096, 2, '#bcbcbc');

  // time axis marks
  box(598, 1493, 2, 31, '#333');
  box(1434, 1493, 2, 31, '#333');
  box(807, 1493, 2, 5, '#444');
  box(1226, 1493, 2, 5, '#444');

  // axis
  PRICE_Y.forEach(function (y, i) {
    box(2096, y, 12, 2, '#555');
    if (LABELS[i]) el('text', { x: 2186, y: y + 7, 'text-anchor': 'end', fill: '#606060' }, LABELS[i]);
  });

  // volume bars
  BARS.forEach(function (b, i) {
    var x = BAR_X0 + STEP * (i - 23), h = VOL_BASE - b[5];
    if (b[0] === 'c') box(x, b[5], BAR_W, h, CYAN);
    else hollow(x, b[5], BAR_W, h, RED);
  });

  // candles
  var COLOR = { c: CYAN, r: RED, y: YEL, w: WHT };
  BARS.forEach(function (b, i) {
    var x = BAR_X0 + STEP * (i - 23), c = COLOR[b[0]];
    box(x + 14, b[3], 2, b[4] - b[3], c);
    if (b[0] === 'r') {
      if (b[2] - b[1] < 7) box(x, b[1], BAR_W, b[2] - b[1] + 2, c);
      else hollow(x, b[1], BAR_W, b[2] - b[1], c);
    } else if (b[0] === 'w') {
      box(x, b[1], BAR_W, 2, c);
    } else {
      box(x, b[1], BAR_W, b[2] - b[1], c);
    }
  });

  // moving averages on price
  line(priceL([[5,800],[100,790],[350,782],[540,760],[720,742],[970,718],[1160,700],[1300,682],[1430,663],[1568,628]]).concat([[1100,778],[1215,729],[1476,648],[1620,600],[1736,566],[1790,555]], priceR([[1180,1498],[1240,1475],[1355,1437]])), '#c4c4c4');
  line(priceL([[5,825],[140,792],[350,718],[480,670],[570,630],[740,578],[860,540],[940,530],[1140,485],[1190,470],[1300,435],[1420,422],[1568,365]]).concat([[1042,708],[1129,668],[1216,625],[1302,580]], priceR([[515,1500],[620,1410],[730,1320],[905,1190],[1010,1095],[1170,985],[1240,935],[1320,905],[1355,890]])), '#00ff00');
  line(priceL([[5,675],[60,650],[130,615],[205,588],[280,558],[385,535],[470,505],[540,482],[620,450],[660,440],[730,435],[850,442],[950,447],[1000,460],[1060,475],[1160,478],[1205,482],[1290,465],[1385,452],[1440,430],[1500,395],[1568,330]]).concat([[1050,685],[1111,645],[1160,600]], priceR([[300,1500],[390,1355],[630,1095],[790,940],[960,765],[1040,710],[1100,680],[1145,668],[1175,662],[1250,668],[1310,695],[1355,742]])), '#ff00ff');
  line(priceL([[5,410],[50,400],[100,383],[135,375],[180,395],[240,408],[320,416],[370,440],[430,470],[475,476],[700,484],[730,490],[770,490],[800,478],[850,484],[1130,483],[1180,470],[1240,452],[1310,430],[1375,415],[1440,375],[1495,310],[1530,240],[1568,190]]).concat([[1032,630],[1080,568]], priceR([[135,1500],[210,1260],[280,1060],[330,950],[390,810],[440,745],[480,700],[540,655],[620,614],[680,620],[750,650],[790,680],[845,730],[905,745],[960,735],[1010,718],[1100,707],[1220,707],[1290,740],[1355,802]])), YEL);
  line(priceL([[5,296],[70,355],[130,378],[220,460],[315,542],[385,545],[440,562],[530,480],[630,422],[770,430],[810,445],[880,490],[935,540],[1075,542],[1130,515],[1180,480],[1260,370],[1315,325],[1375,295],[1430,262],[1470,200],[1568,20]]).concat([[1033,550],[1060,497]], priceR([[110,1200],[180,940],[230,720],[280,565],[330,480],[395,440],[450,490],[510,610],[565,720],[620,765],[680,820],[730,805],[790,765],[850,732],[905,720],[960,655],[1018,625],[1100,668],[1190,695],[1245,760],[1300,870],[1355,945]])), WHT);

  // moving averages on volume
  line(volL([[5,725],[60,755],[110,770],[160,787],[210,793],[260,795],[320,802],[390,818],[440,812],[490,803],[550,800],[650,802],[700,812],[750,830],[800,848],[860,870],[900,880],[970,878],[1000,870],[1060,850],[1100,840],[1150,800],[1200,765],[1280,758],[1300,752],[1340,730],[1370,722],[1430,720],[1480,700],[1500,660],[1568,530]]).concat(volR([[100,610],[170,480],[220,428],[250,370],[285,305],[337,272],[400,320],[460,370],[515,410],[560,485],[620,507],[700,520],[735,537],[790,512],[850,525],[900,542],[960,518],[1010,500],[1050,515],[1120,535],[1190,545],[1245,627],[1300,660],[1355,710]])), WHT);
  line(volL([[5,727],[75,733],[110,741],[185,741],[225,758],[300,758],[390,795],[490,800],[650,802],[700,815],[800,825],[845,836],[940,836],[945,842],[1055,842],[1090,850],[1200,818],[1260,815],[1340,792],[1400,770],[1460,745],[1500,715],[1568,645]]).concat(volR([[90,695],[180,610],[250,545],[290,515],[390,445],[470,420],[550,400],[620,393],[680,410],[735,445],[800,458],[845,507],[905,525],[950,513],[1090,522],[1190,545],[1240,570],[1300,578],[1355,615]])), YEL);

  // limit-up indicator
  line([[0,1489],[877,1489],[915,1273],[998,1273],[1037,1489],[1950,1489]], YEL, 3);
  box(913, 1276, 2, 16, '#4040ff');

  // crosshair
  box(913, 30, 2, 871, '#c8c8c8');
  box(913, 936, 2, 292, '#c8c8c8');
  box(913, 1264, 2, 227, '#c8c8c8');

  // extreme price notes
  line([[1199,68],[1199,76],[1222,84]], '#a0aab4', 1);
  el('text', { x: 1227, y: 90, fill: '#a0aab4' }, '13.55');
  line([[172,848],[186,848]], '#a0aab4', 2);
  line([[165,846],[170,856]], '#a0aab4', 2);
  el('text', { x: 188, y: 857, fill: '#a0aab4' }, '5.45');

  // small layout icons at the top right of the chart
  el('path', { d: 'M2040 5l7 7-7 7-7-7Z', fill: 'none', stroke: '#666', 'stroke-width': 2 });
  el('rect', { x: 2068, y: 4, width: 14, height: 16, fill: 'none', stroke: '#777', 'stroke-width': 2 });
  box(2076, 4, 6, 16, '#777');
})();
```
